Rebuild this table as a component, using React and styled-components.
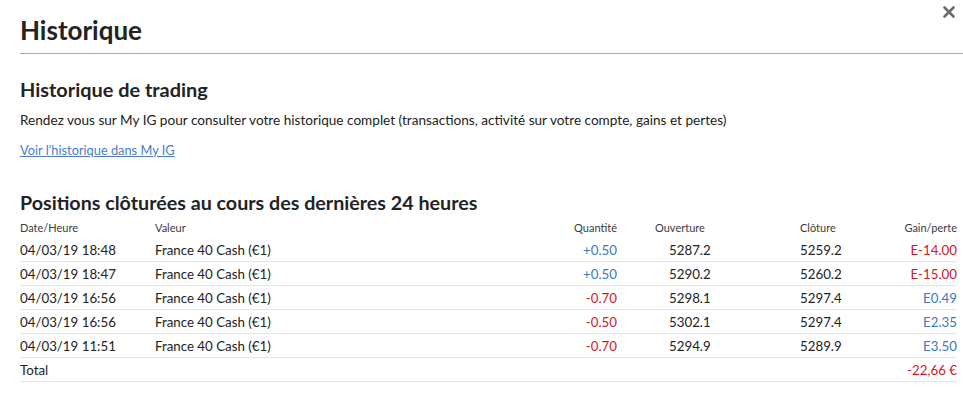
import React from "react"
import styled, { createGlobalStyle } from "styled-components"

const GlobalStyle = createGlobalStyle`
  body {
    margin: 0;
    background: #fff;
    font-family: "Lato", "Noto Sans", sans-serif;
    color: #222;
  }
`

const Panel = styled.div`
  width: 963px;
  height: 396px;
  box-sizing: border-box;
  padding: 0 6px 0 20px;
  position: relative;
  overflow: hidden;
`

const Header = styled.header`
  display: flex;
  align-items: center;
  height: 53px;
  border-bottom: 1px solid #a9a9b0;
  margin-right: -6px;
  h1 {
    margin: 0;
    padding-top: 7px;
    font-size: 26px;
    font-weight: 700;
    color: #232323;
  }
`

const Close = styled.button`
  position: absolute;
  top: 4px;
  right: 6px;
  width: 16px;
  height: 16px;
  padding: 0;
  border: 0;
  background: none;
  cursor: pointer;
`

const Section = styled.section`
  h2 {
    margin: 0;
    font-weight: 700;
    color: #232323;
  }
`

const Trading = styled(Section)`
  padding-top: 23px;
  h2 {
    font-size: 19.9px;
  }
  p {
    margin: 11px 0 0;
    font-size: 13.6px;
  }
  a {
    display: inline-block;
    margin-top: 14px;
    font-size: 12.8px;
    color: #4a7ccc;
    text-decoration: underline;
  }
`

const Closed = styled(Section)`
  padding-top: 33px;
  h2 {
    font-size: 19.7px;
  }
`

const Table = styled.div`
  margin-top: 3px;
`

const Row = styled.div`
  display: grid;
  grid-template-columns: 135px 1fr 128px 130px 90px 120px;
  align-items: center;
  height: ${(p) => (p.head ? "21px" : "23px")};
  border-bottom: ${(p) => (p.head ? "none" : "1px solid #e4e4e4")};
  font-size: ${(p) => (p.head ? "11px" : "13.3px")};
  color: ${(p) => (p.head ? "#3b3b44" : "#222")};
`

const Cell = styled.div`
  text-align: ${(p) => p.align || "left"};
  padding-left: ${(p) => p.pad || 0}px;
  color: ${(p) =>
    p.tone === "up" ? "#3c78c4" : p.tone === "down" ? "#d3171f" : "inherit"};
`

const rows = [
  ["04/03/19 18:48", "+0.50", "5287.2", "5259.2", "E-14.00"],
  ["04/03/19 18:47", "+0.50", "5290.2", "5260.2", "E-15.00"],
  ["04/03/19 16:56", "-0.70", "5298.1", "5297.4", "E0.49"],
  ["04/03/19 16:56", "-0.50", "5302.1", "5297.4", "E2.35"],
  ["04/03/19 11:51", "-0.70", "5294.9", "5289.9", "E3.50"],
]

const tone = (v) => (v.includes("-") ? "down" : "up")

export default function App() {
  return (
    <>
      <GlobalStyle />
      <Panel>
        <Header>
          <h1>Historique</h1>
        </Header>
        <Close aria-label="Fermer">
          <svg width="16" height="16" viewBox="0 0 16 16">
            <path
              d="M3.5 3.5 L12.5 12.5 M12.5 3.5 L3.5 12.5"
              stroke="#6a6a72"
              strokeWidth="2.6"
              strokeLinecap="round"
            />
          </svg>
        </Close>

        <Trading>
          <h2>Historique de trading</h2>
          <p>
            Rendez vous sur My IG pour consulter votre historique complet
            (transactions, activité sur votre compte, gains et pertes)
          </p>
          <a href="#">Voir l'historique dans My IG</a>
        </Trading>

        <Closed>
          <h2>Positions clôturées au cours des dernières 24 heures</h2>
          <Table>
            <Row head>
              <Cell>Date/Heure</Cell>
              <Cell>Valeur</Cell>
              <Cell align="right">Quantité</Cell>
              <Cell pad={38}>Ouverture</Cell>
              <Cell pad={53}>Clôture</Cell>
              <Cell align="right">Gain/perte</Cell>
            </Row>
            {rows.map((r, i) => (
              <Row key={i}>
                <Cell>{r[0]}</Cell>
                <Cell>France 40 Cash (€1)</Cell>
                <Cell align="right" tone={tone(r[1])}>
                  {r[1]}
                </Cell>
                <Cell pad={52}>{r[2]}</Cell>
                <Cell pad={53}>{r[3]}</Cell>
                <Cell align="right" tone={tone(r[4])}>
                  {r[4]}
                </Cell>
              </Row>
            ))}
            <Row>
              <Cell>Total</Cell>
              <Cell />
              <Cell />
              <Cell />
              <Cell />
              <Cell align="right" tone="down">
                -22,66 €
              </Cell>
            </Row>
          </Table>
        </Closed>
      </Panel>
    </>
  )
}
